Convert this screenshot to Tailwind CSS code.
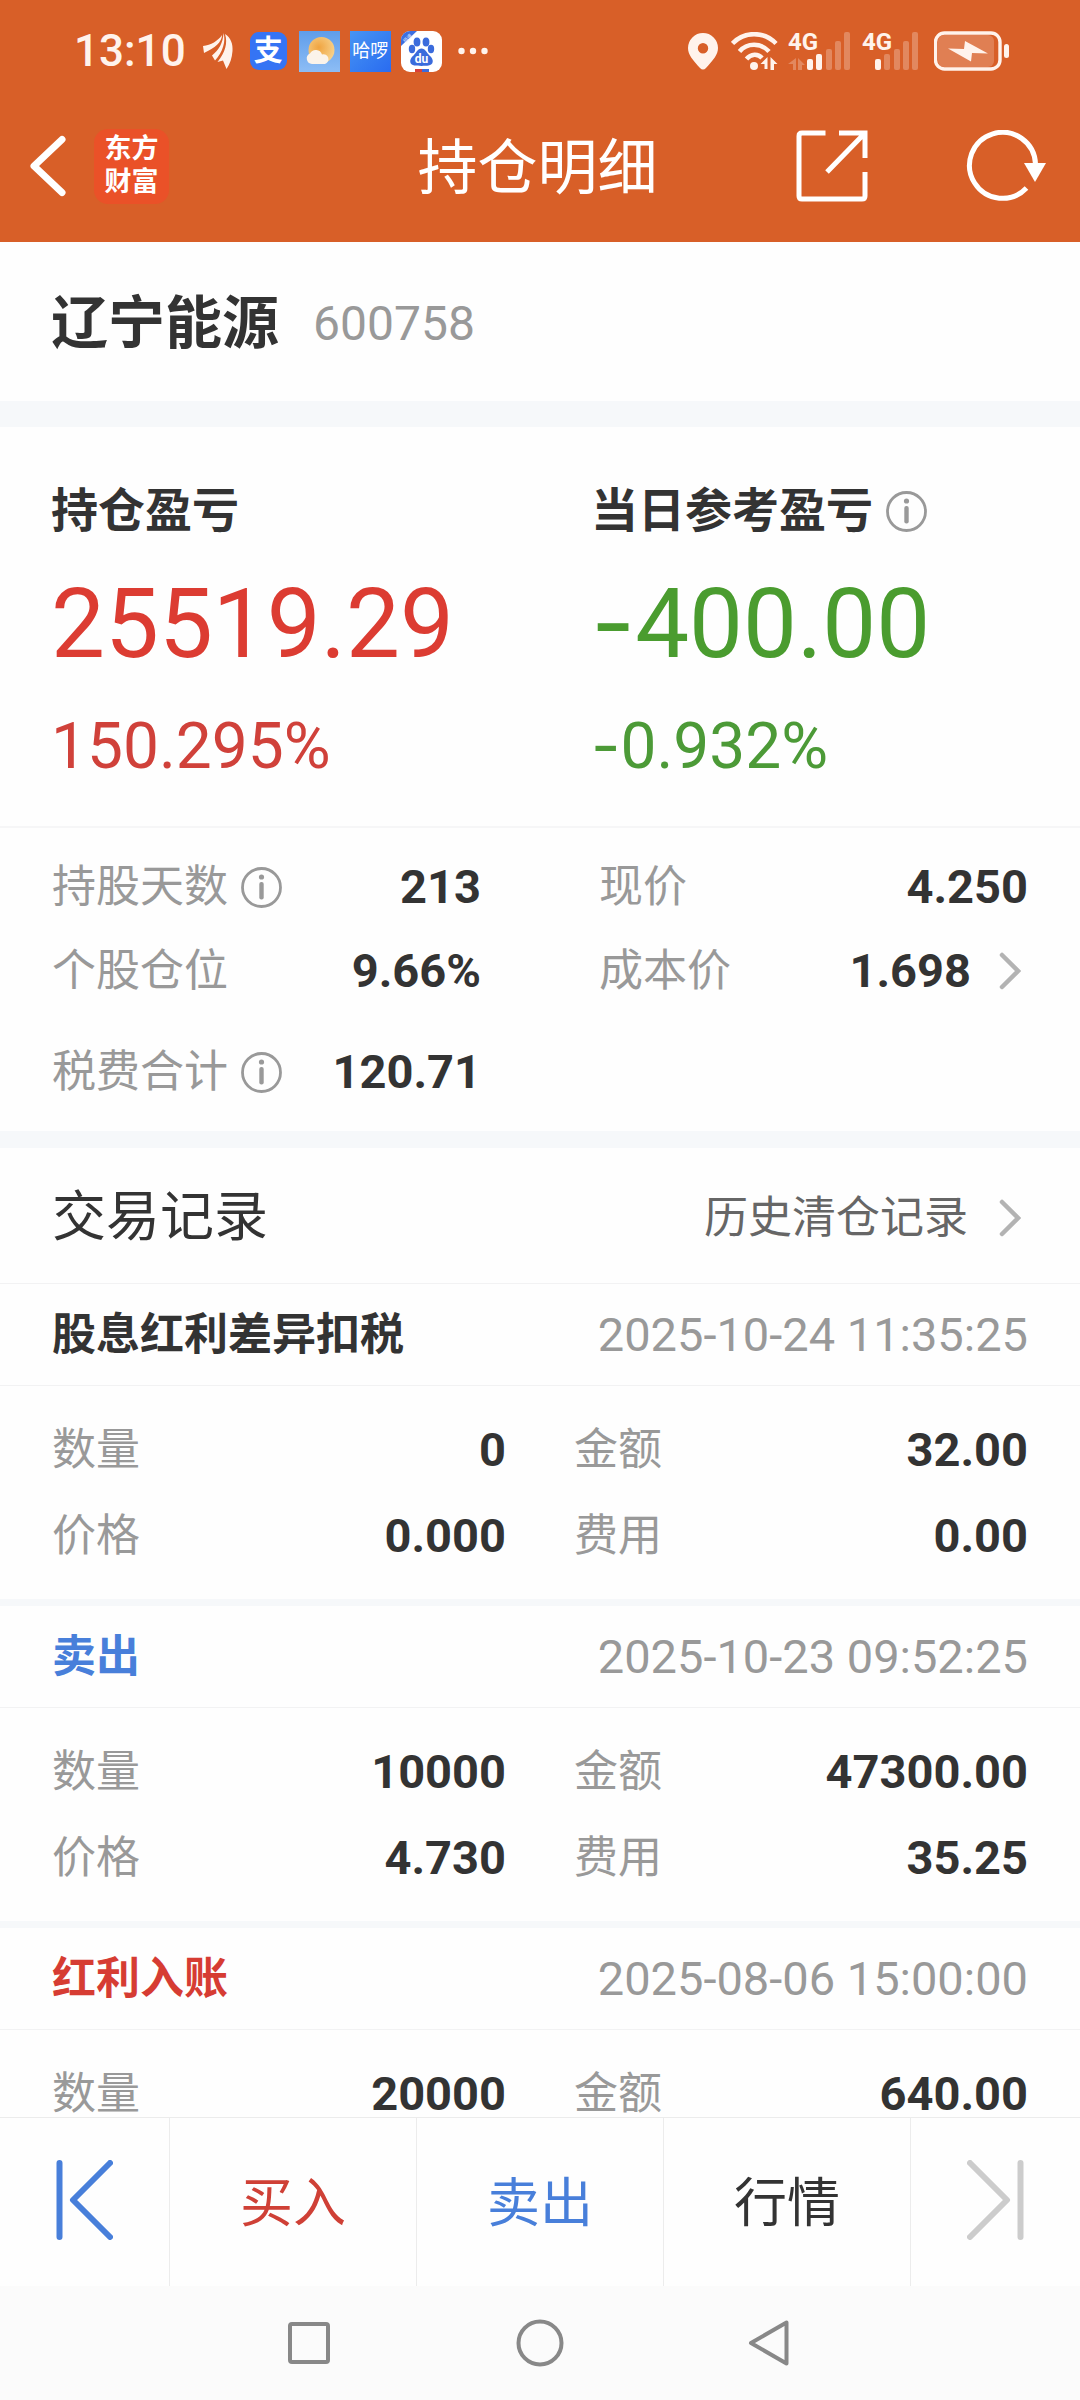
<!DOCTYPE html>
<html lang="zh-CN">
<head>
<meta charset="utf-8">
<meta name="viewport" content="width=device-width, initial-scale=1">
<title>持仓明细</title>
<script src="https://cdn.jsdelivr.net/npm/@tailwindcss/browser@4"></script>
</head>
<body class="flex h-screen flex-col bg-[#fefefe] font-[Roboto,'Noto_Sans_CJK_SC',sans-serif] text-[44px] leading-[60px] text-[#333333]">

<header class="shrink-0 bg-[#d85f28] text-white">
  <!-- system status -->
  <div class="flex h-[102px] items-center justify-between pr-[70px] pl-[74px] text-[#fff3ec]">
    <div class="flex items-center">
      <span class="text-[44px] font-medium">13:10</span>
      <svg class="ml-[17px] h-[36px] w-[30px]" viewBox="0 0 30 36" fill="currentColor" aria-hidden="true"><path d="M0 13C8 12 15 8 19 2C19 9 12 15 1 20zM20.500 0C23 8 20 19 12 27.500L9 22.500C16 17 20 10 20.500 0zM22 1C28 5 30 11 29.500 18C29 25 27 31 23.500 36L20 27.500L14.500 29C22 20 25 10 22 1z"/></svg>
      <span class="ml-[17px] flex h-[38px] w-[37px] items-center justify-center rounded-[9px] bg-[#3574f4] text-[29px] font-bold text-white">支</span>
      <svg class="ml-[12px] size-[41px]" viewBox="0 0 41 41" aria-hidden="true"><defs><linearGradient id="sky" x1="0" y1="0" x2="0" y2="1"><stop offset="0" stop-color="#5f9dea"/><stop offset="1" stop-color="#8dbdf5"/></linearGradient><radialGradient id="sun" cx=".4" cy=".4" r=".65"><stop offset="0" stop-color="#f0a440"/><stop offset="1" stop-color="#f7d28d"/></radialGradient></defs><path fill="url(#sky)" d="M0 0h41v41H0z"/><circle cx="22.500" cy="19" r="13" fill="url(#sun)"/><path fill="#fbf3ea" d="M13 33a5.500 5.500 0 0 1-2-10.500a6.500 6.500 0 0 1 12 1a4.800 4.800 0 0 1 3 9.500z"/></svg>
      <span class="ml-[10px] flex size-[41px] items-center justify-center bg-linear-to-br from-[#4894f3] to-[#2a6bf0] text-[18px] text-white">哈啰</span>
      <svg class="ml-[10px] size-[41px]" viewBox="0 0 41 41" aria-hidden="true"><defs><clipPath id="tile"><rect width="41" height="41" rx="9"/></clipPath></defs><g clip-path="url(#tile)"><path fill="#fff" d="M0 0h41v41H0z"/><path fill="#3d6fe0" d="M0 0h16L0 15z"/><g fill="#3a6bdc"><ellipse cx="16" cy="11" rx="3.400" ry="4.500"/><ellipse cx="25" cy="11" rx="3.400" ry="4.500"/><ellipse cx="11" cy="18" rx="3.200" ry="4.200"/><ellipse cx="30" cy="18" rx="3.200" ry="4.200"/><path d="M20.500 17.500c4 0 5 4 8 7c5 4 4 9.500-1 10c-3 .5-11 .5-14 0c-5-.5-6-6-1-10c3-3 4-7 8-7z"/></g><path fill="#d9403a" d="M14 38h7v3h-7z"/><path fill="#3a6bdc" d="M21 38h7v3h-7z"/><text x="20.500" y="32" fill="#fff" font-family="Roboto" font-size="12" font-weight="700" text-anchor="middle">du</text><text x="3" y="11" fill="#dbe6ff" font-family="Noto Sans CJK SC" font-size="5" transform="rotate(-45 5 10)">极速</text></g></svg>
      <svg class="ml-[16px] h-[8px] w-[30px]" viewBox="0 0 30 8" fill="currentColor" aria-hidden="true"><circle cx="3.500" cy="4" r="3.200"/><circle cx="15" cy="4" r="3.200"/><circle cx="26.500" cy="4" r="3.200"/></svg>
    </div>
    <div class="flex items-center">
      <svg class="h-[37px] w-[30px]" viewBox="0 0 30 37" fill="currentColor" fill-rule="evenodd" aria-hidden="true"><path d="M15 0a15 15 0 0 1 15 15c0 7-5 12-12 20q-3 3-6 0C5 27 0 22 0 15A15 15 0 0 1 15 0zM15 10a5.200 5.200 0 1 0 0 10.400a5.200 5.200 0 1 0 0-10.400z"/></svg>
      <svg class="ml-[13px] h-[39px] w-[48px]" viewBox="0 0 48 39" aria-hidden="true"><g fill="none" stroke="currentColor" stroke-width="4.500"><path d="M1.500 11.500C13-1 33-1 45 11.500"/><path d="M8.500 19.500C16 10.500 30 10.500 38 19.500"/><path d="M15.500 27C20 21.500 27 21.500 31 26"/></g><g fill="currentColor"><circle cx="23" cy="34" r="4"/><path d="M36.500 25v12h-3v-5h-4zM39.500 38V25l7 7h-3.500v6z"/></g></svg>
      <svg class="ml-[9px] h-[48px] w-[63px]" viewBox="0 -4 63 48" fill="currentColor" aria-hidden="true"><text x="0" y="19" font-family="Roboto" font-size="24" font-weight="700">4G</text><g opacity=".28"><path d="M8 27v12H5v-6H0zM10 39V27l7 7h-3v5z"/><rect x="38" y="18" width="6" height="21" rx="2"/><rect x="47" y="10" width="6" height="29" rx="2"/><rect x="56" y="1" width="6" height="38" rx="2"/></g><rect x="19" y="28" width="6" height="11" rx="2"/><rect x="28" y="23" width="6" height="16" rx="2"/></svg>
      <svg class="ml-[11px] h-[48px] w-[57px]" viewBox="0 -4 57 48" fill="currentColor" aria-hidden="true"><text x="0" y="19" font-family="Roboto" font-size="24" font-weight="700">4G</text><g opacity=".28"><rect x="22" y="23" width="6" height="16" rx="2"/><rect x="32" y="18" width="6" height="21" rx="2"/><rect x="41" y="10" width="6" height="29" rx="2"/><rect x="50" y="1" width="6" height="38" rx="2"/></g><rect x="13" y="28" width="6" height="11" rx="2"/></svg>
      <svg class="ml-[15px] h-[40px] w-[76px]" viewBox="0 0 76 40" aria-hidden="true"><rect x="4" y="4" width="56" height="32" rx="6" fill="currentColor" opacity=".22"/><rect x="1.500" y="2" width="64.500" height="36" rx="9" fill="none" stroke="currentColor" stroke-width="3.400"/><rect x="70" y="13" width="5" height="14" rx="2.500" fill="currentColor"/><path fill="currentColor" d="M31 10l23 12.500l-16-.5l-1 8.500L14 17.500l16 .5z"/></svg>
    </div>
  </div>

  <!-- title bar -->
  <div class="mb-3 grid h-[128px] grid-cols-[1fr_auto_1fr] items-center pr-[34px] pl-[29px]">
    <div class="flex items-center gap-[27px]">
      <button type="button" aria-label="返回"><svg class="h-[62px] w-[38px]" viewBox="0 0 38 62" fill="none" stroke="currentColor" stroke-width="7" stroke-linecap="round" stroke-linejoin="round"><path d="M33 4.500L5 31l28 26.500"/></svg></button>
      <a href="#" class="flex size-[75px] flex-col items-center justify-center rounded-[14px] bg-[#ea5128] text-[27px] leading-[33px] font-bold"><span>东方</span><span>财富</span></a>
    </div>
    <h1 class="pt-[6px] text-[60px]">持仓明细</h1>
    <div class="flex items-center justify-end gap-[98px]">
      <button type="button" aria-label="分享"><svg class="size-[72px]" viewBox="0 0 72 72" fill="none" stroke="currentColor" stroke-width="5"><path d="M29.500 3H6q-3 0-3 3v60q0 3 3 3h60q3 0 3-3V42M43 3h26v25M69 3L31 42" stroke-linejoin="miter"/></svg></button>
      <button type="button" aria-label="刷新"><svg class="h-[72px] w-[80px]" viewBox="0 0 80 72"><path d="M60.500 58A33 33 0 1 1 69.500 34" fill="none" stroke="currentColor" stroke-width="5"/><path d="M58 33h22L69 52z" fill="currentColor"/></svg></button>
    </div>
  </div>
</header>

<main class="min-h-0 flex-1 overflow-y-auto [scrollbar-width:none]">
  <section class="flex h-[159px] items-center gap-[34px] px-[51px] pt-[4px]">
    <h2 class="text-[57px] font-bold">辽宁能源</h2>
    <span class="text-[48px] text-[#999999]">600758</span>
  </section>

  <section class="border-t-[26px] border-[#f6f8fa]">
    <div class="grid grid-cols-2 gap-x-[102px] border-b-2 border-[#f6f6f7] px-[51px] pt-[54px] pb-[39px]">
      <div>
        <h3 class="text-[47px] font-bold">持仓盈亏</h3>
        <p class="mt-[18px] text-[96px] leading-[130px] text-[#dc3c32]">25519.29</p>
        <p class="mt-[18px] text-[64px] leading-[80px] text-[#d0413a]">150.295%</p>
      </div>
      <div>
        <div class="flex items-center gap-[13px]">
          <h3 class="text-[47px] font-bold">当日参考盈亏</h3>
          <button type="button" aria-label="当日参考盈亏说明" class="text-[#999999]"><svg class="size-[41px]" viewBox="0 0 41 41"><circle cx="20.500" cy="20.500" r="19" fill="none" stroke="currentColor" stroke-width="2.800"/><circle cx="20.500" cy="10" r="2.600" fill="currentColor"/><rect x="18.300" y="15" width="4.400" height="17.500" rx="2" fill="currentColor"/></svg></button>
        </div>
        <p class="mt-[18px] text-[96px] leading-[130px] text-[#4a9c2f]"><span class="font-[Inter] leading-none">-</span>400.00</p>
        <p class="mt-[18px] text-[64px] leading-[80px] text-[#4c9a37]"><span class="font-[Inter] leading-none">-</span>0.932%</p>
      </div>
    </div>

    <dl class="grid grid-cols-2 gap-x-[118px] px-[52px] pt-[17px]">
      <div class="flex h-[84px] items-center">
        <dt class="flex items-center gap-[13px] text-[#999999]">持股天数 <button type="button" aria-label="持股天数说明"><svg class="size-[41px]" viewBox="0 0 41 41"><circle cx="20.500" cy="20.500" r="19" fill="none" stroke="currentColor" stroke-width="2.800"/><circle cx="20.500" cy="10" r="2.600" fill="currentColor"/><rect x="18.300" y="15" width="4.400" height="17.500" rx="2" fill="currentColor"/></svg></button></dt>
        <dd class="ml-auto text-[47px] font-bold">213</dd>
      </div>
      <div class="flex h-[84px] items-center">
        <dt class="text-[#999999]">现价</dt>
        <dd class="ml-auto text-[47px] font-bold">4.250</dd>
      </div>
      <div class="flex h-[84px] items-center">
        <dt class="text-[#999999]">个股仓位</dt>
        <dd class="ml-auto text-[47px] font-bold">9.66%</dd>
      </div>
      <div class="flex h-[84px] items-center">
        <dt class="text-[#999999]">成本价</dt>
        <dd class="ml-auto text-[47px] font-bold"><a href="#" class="flex items-center gap-[28px] pr-[7px]">1.698 <svg class="h-[38px] w-[22px] text-[#b3b3b3]" viewBox="0 0 22 38" fill="none" stroke="currentColor" stroke-width="4.500" stroke-linecap="round" aria-hidden="true"><path d="M3 3l16 16L3 35"/></svg></a></dd>
      </div>
      <div class="flex h-[118px] items-center">
        <dt class="flex items-center gap-[13px] text-[#999999]">税费合计 <button type="button" aria-label="税费合计说明"><svg class="size-[41px]" viewBox="0 0 41 41"><circle cx="20.500" cy="20.500" r="19" fill="none" stroke="currentColor" stroke-width="2.800"/><circle cx="20.500" cy="10" r="2.600" fill="currentColor"/><rect x="18.300" y="15" width="4.400" height="17.500" rx="2" fill="currentColor"/></svg></button></dt>
        <dd class="ml-auto text-[47px] font-bold">120.71</dd>
      </div>
    </dl>
  </section>

  <section class="border-t-[17px] border-[#f6f8fa]">
    <div class="flex h-[136px] items-center justify-between border-b border-[#f2f2f3] px-[52px] pt-[4px]">
      <h2 class="text-[54px]">交易记录</h2>
      <a href="#" class="flex items-center gap-[31px] pr-[7px] text-[#666666]">历史清仓记录 <svg class="h-[38px] w-[22px] text-[#b3b3b3]" viewBox="0 0 22 38" fill="none" stroke="currentColor" stroke-width="4.500" stroke-linecap="round" aria-hidden="true"><path d="M3 3l16 16L3 35"/></svg></a>
    </div>

    <article class="border-b-[7px] border-[#f6f8fa]">
      <div class="flex h-[102px] items-center justify-between border-b border-[#f2f2f3] px-[52px]">
        <h3 class="font-bold">股息红利差异扣税</h3>
        <time class="text-[47px] text-[#999999]">2025-10-24 11:35:25</time>
      </div>
      <dl class="grid grid-cols-2 gap-x-[68px] px-[52px] pt-[21px] pb-[20px]">
        <div class="flex h-[86px] items-center justify-between"><dt class="text-[#999999]">数量</dt><dd class="text-[47px] font-bold">0</dd></div>
        <div class="flex h-[86px] items-center justify-between"><dt class="text-[#999999]">金额</dt><dd class="text-[47px] font-bold">32.00</dd></div>
        <div class="flex h-[86px] items-center justify-between"><dt class="text-[#999999]">价格</dt><dd class="text-[47px] font-bold">0.000</dd></div>
        <div class="flex h-[86px] items-center justify-between"><dt class="text-[#999999]">费用</dt><dd class="text-[47px] font-bold">0.00</dd></div>
      </dl>
    </article>

    <article class="border-b-[7px] border-[#f6f8fa]">
      <div class="flex h-[102px] items-center justify-between border-b border-[#f2f2f3] px-[52px]">
        <h3 class="font-bold text-[#487fda]">卖出</h3>
        <time class="text-[47px] text-[#999999]">2025-10-23 09:52:25</time>
      </div>
      <dl class="grid grid-cols-2 gap-x-[68px] px-[52px] pt-[21px] pb-[20px]">
        <div class="flex h-[86px] items-center justify-between"><dt class="text-[#999999]">数量</dt><dd class="text-[47px] font-bold">10000</dd></div>
        <div class="flex h-[86px] items-center justify-between"><dt class="text-[#999999]">金额</dt><dd class="text-[47px] font-bold">47300.00</dd></div>
        <div class="flex h-[86px] items-center justify-between"><dt class="text-[#999999]">价格</dt><dd class="text-[47px] font-bold">4.730</dd></div>
        <div class="flex h-[86px] items-center justify-between"><dt class="text-[#999999]">费用</dt><dd class="text-[47px] font-bold">35.25</dd></div>
      </dl>
    </article>

    <article>
      <div class="flex h-[102px] items-center justify-between border-b border-[#f2f2f3] px-[52px]">
        <h3 class="font-bold text-[#d63c33]">红利入账</h3>
        <time class="text-[47px] text-[#999999]">2025-08-06 15:00:00</time>
      </div>
      <dl class="grid grid-cols-2 gap-x-[68px] px-[52px] pt-[21px]">
        <div class="flex h-[86px] items-center justify-between"><dt class="text-[#999999]">数量</dt><dd class="text-[47px] font-bold">20000</dd></div>
        <div class="flex h-[86px] items-center justify-between"><dt class="text-[#999999]">金额</dt><dd class="text-[47px] font-bold">640.00</dd></div>
      </dl>
    </article>
  </section>
</main>

<footer class="shrink-0">
  <div class="grid h-[169px] grid-cols-[170fr_247fr_247fr_247fr_169fr] divide-x divide-[#ececec] border-t border-[#ececec] bg-[#fefefe] text-[53px]">
    <button type="button" aria-label="上一只" class="flex items-center justify-center pb-[4px] text-[#487fda]"><svg class="h-[80px] w-[57px]" viewBox="0 0 57 80" fill="none" stroke="currentColor" stroke-width="6" stroke-linecap="round" stroke-linejoin="round"><path d="M3.500 3v74M54 3L17 40l37 37"/></svg></button>
    <button type="button" class="pt-[4px] text-[#cf4036]">买入</button>
    <button type="button" class="pt-[4px] text-[#487fda]">卖出</button>
    <button type="button" class="pt-[4px]">行情</button>
    <button type="button" aria-label="下一只" class="flex items-center justify-center pb-[4px] text-[#cccccc]"><svg class="h-[80px] w-[57px]" viewBox="0 0 57 80" fill="none" stroke="currentColor" stroke-width="6" stroke-linecap="round" stroke-linejoin="round"><path d="M53.500 3v74M3 3l37 37L3 77"/></svg></button>
  </div>
  <nav class="flex h-[114px] items-center justify-center gap-[183px] bg-[#fbfbfb] text-[#888888]">
    <button type="button" aria-label="最近任务"><svg class="size-[48px]" viewBox="0 0 48 48" fill="none" stroke="currentColor" stroke-width="4"><rect x="5" y="5" width="38" height="38" rx="2"/></svg></button>
    <button type="button" aria-label="主屏幕"><svg class="size-[48px]" viewBox="0 0 48 48" fill="none" stroke="currentColor" stroke-width="4"><circle cx="24" cy="24" r="21.500"/></svg></button>
    <button type="button" aria-label="返回上一级"><svg class="size-[48px]" viewBox="0 0 48 48" fill="none" stroke="currentColor" stroke-width="4" stroke-linejoin="round"><path d="M39.500 3.500v41L4 24z"/></svg></button>
  </nav>
</footer>
</body>
</html>
